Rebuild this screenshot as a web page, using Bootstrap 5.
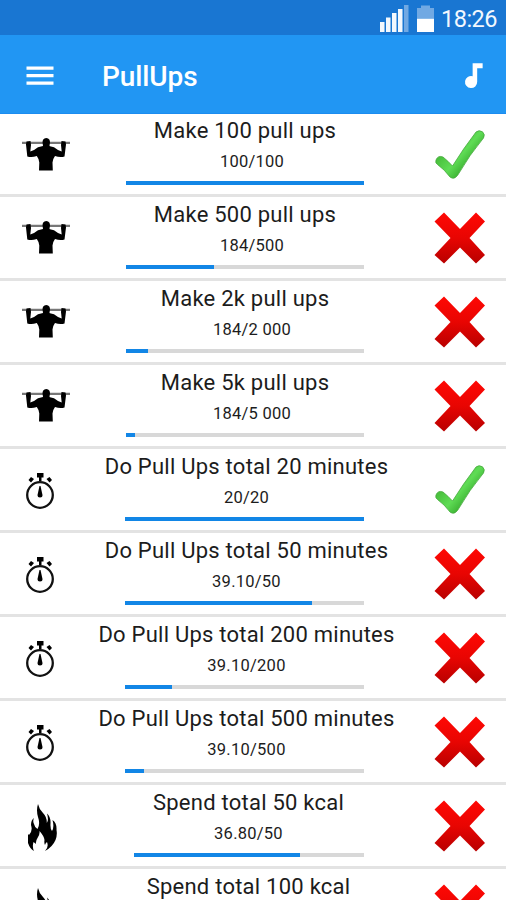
<!DOCTYPE html>
<html lang="en">
<head>
<meta charset="utf-8">
<meta name="viewport" content="width=device-width, initial-scale=1">
<title>PullUps</title>
<link rel="stylesheet" href="https://cdn.jsdelivr.net/npm/bootstrap@5.3.0/dist/css/bootstrap.min.css">
<style>
body{font-family:Roboto,"Liberation Sans",sans-serif;background:#fff;color:#1c1c1c}
.screen{width:506px;height:900px}
.statusbar{height:35px;background:#1976d2;padding:0 9px 0 0}
.clock{font-size:23.5px;line-height:35px;letter-spacing:-.5px;margin:4px 0 0 6px;color:#f3f8fe}
.appbar{height:79px;background:#2196f3;border-bottom:1px solid #1c8cf0;padding:3px 22px 0 26px}
.brand{font-size:28px;font-weight:500;line-height:36px;margin:3px 0 0 48px;letter-spacing:-.1px}
.goal{height:84px;border-bottom:3px solid #e3e3e3}
.goal:first-child{height:83px}
.goal:first-child .info{margin-top:-1px}
.kind{width:90px}
.info{width:320px;margin:0}
.state{width:96px;padding-top:1px}
.title{font-size:22px;line-height:26px;letter-spacing:.24px;padding-top:5px;white-space:nowrap}
.count{font-size:16.5px;line-height:20px;letter-spacing:.25px;margin-top:8px;white-space:nowrap}
.meter{height:4px;width:238px;margin:9px 0 0 36px;background:#d8d8d8;border-radius:0}
.meter .progress-bar{background:#1286e6}
.pull .title{margin-left:-10px}
.pull .count{margin-left:4px}
.time .title,.time .count{margin-left:-7px}
.time .meter{margin-left:35px;width:239px}
.burn .title,.burn .count{margin-left:-3px}
.burn .meter{margin-left:44px;width:230px}
.kind svg,.state svg{display:block}
.pull .kind svg{margin:1px 0 0 22px}
.time .kind svg{margin:2px 0 0 25px}
.burn .kind svg{margin:5px 0 0 28px}
</style>
</head>
<body>
<svg width="0" height="0" class="position-absolute" aria-hidden="true">
<defs>
<linearGradient id="red" x1="0" y1="0" x2="0" y2="1"><stop offset="0" stop-color="#ff0804"/><stop offset=".5" stop-color="#e80502"/><stop offset="1" stop-color="#b80000"/></linearGradient>
<linearGradient id="green" gradientUnits="userSpaceOnUse" x1="12" y1="10" x2="42" y2="36"><stop offset="0" stop-color="#3fb332"/><stop offset=".55" stop-color="#5fdc55"/><stop offset="1" stop-color="#2b9e22"/></linearGradient>
<symbol id="cross" viewBox="0 0 52 52"><path fill="url(#red)" d="M10 .5 26 17 42 .5 51 9.500 35.500 26 51 43 42 51.500 26 35.500 10 51.500.5 43 16.500 26 .5 9.500Z"/></symbol>
<symbol id="check" viewBox="0 0 52 52"><path fill="url(#green)" stroke="#45a83c" stroke-width=".8" d="M2 31Q4 26 9 28Q14 32 18.500 37Q29 20 42 3Q45 .5 48.500 2.800Q51.500 5.500 49.500 9Q36 25 23.500 46.500Q20 51 16 48Q11 41 3.500 35.500Q1 34 2 31Z"/></symbol>
<symbol id="pull" viewBox="0 0 48 34"><path fill="#777" d="M0 3.800h48v2.200H0z"/><path d="M4.500 3.500 8.500 3l.5 4-.7 6.500 3.700-1.500q4-3.500 8-3.700L21 8Q19.800 4 21 1.800 22.300 0 24.300 0q2 0 3.200 1.800Q28.700 4 27.500 8l.5.300q4 .2 8 3.700l3.700 1.500L39 7l.5-4 4 .5.500 3-1.500 12q-4.500 1.300-9.500-.5-2 2.500-2.500 6.500l.3 8H17l.3-8q-.5-4-2.500-6.500-5 1.800-9.500.5L4 6.500Z"/></symbol>
<symbol id="timer" viewBox="0 0 30 36"><circle cx="15" cy="22" r="12.800" fill="none" stroke="#111" stroke-width="2.300"/><path d="M12 0h6.500v4.500h-2V8h-2.500V4.500h-2zM3.500 7 6 4l3 2-3 3.500zM27 7l-2.500-3-3 2 3 3.500z"/><path d="M14.500 13h1L17.500 22q0 2.500-2.500 2.500t-2.500-2.500z"/></symbol>
<symbol id="fire" viewBox="0 0 30 48"><path d="M10 0q1 5 5 9 4 4 3.800 10 2.200-3 .2-9.500Q23 13 22.500 20q-.3 5 1.500 7 2.500-4 .5-11Q29 19 28.500 26q1 5-1 10-3 7-10.500 11 4-4 2-9-1.500 1-2 3-1-2-.5-5-.5-4-5-9 .5 4-2 7-2 3-1.500 6l-2.500-2q-1.500 5 .5 9-4-2-6-8-2.500-5-1-11 .5 2 2 3Q5 27 3 21q0-5 3-7-1.500 3 0 6 .5 3 3.500 5 3-5 .5-12Q8 6 10 0Z"/></symbol>
</defs>
</svg>
<div class="screen overflow-hidden">
<header>
<div class="statusbar d-flex justify-content-end align-items-center">
<svg width="56" height="29" viewBox="0 0 56 29"><path fill="#fff" fill-opacity=".95" d="M1 19h4.500v10H1zM7 14.500h4.500V29H7zM13 10h4.500v19H13zM19 6h4.500v23H19z"/><path fill="#71a9e3" d="M25 2h4.500v27H25zM38 5h4V2.500h9V5h4v10H38z"/><path fill="#fff" d="M38 15.500h17V29H38z"/></svg>
<span class="clock">18:26</span>
</div>
<nav class="appbar d-flex align-items-center text-white">
<svg width="28" height="20" viewBox="0 0 28 20" fill="#fff"><path d="M.5.5h27v3.300H.5zM.5 8h27v3.300H.5zM.5 15.500h27v3.300H.5z"/></svg>
<span class="brand">PullUps</span>
<svg width="20" height="27" viewBox="0 0 22 29" class="ms-auto" fill="#fff"><path d="M9.500 1h11v5.500h-6V21.500a6.700 6.700 0 1 1-5-6.300z"/></svg>
</nav>
</header>
<main id="goals"></main>
</div>
<script src="https://cdn.jsdelivr.net/npm/bootstrap@5.3.0/dist/js/bootstrap.bundle.min.js"></script>
<script>
const icons = {
  pull: '<svg width="48" height="34"><use href="#pull"/></svg>',
  time: '<svg width="30" height="36"><use href="#timer"/></svg>',
  burn: '<svg width="30" height="48"><use href="#fire"/></svg>'
};
const goals = [
  ['pull', 'Make 100 pull ups', '100/100', 100],
  ['pull', 'Make 500 pull ups', '184/500', 36.8],
  ['pull', 'Make 2k pull ups', '184/2 000', 9.3],
  ['pull', 'Make 5k pull ups', '184/5 000', 3.6],
  ['time', 'Do Pull Ups total 20 minutes', '20/20', 100],
  ['time', 'Do Pull Ups total 50 minutes', '39.10/50', 78.2],
  ['time', 'Do Pull Ups total 200 minutes', '39.10/200', 19.6],
  ['time', 'Do Pull Ups total 500 minutes', '39.10/500', 7.8],
  ['burn', 'Spend total 50 kcal', '36.80/50', 72],
  ['burn', 'Spend total 100 kcal', '', 36.8]
];
document.getElementById('goals').innerHTML = goals.map(([kind, title, count, pct]) => `
<section class="goal ${kind} d-flex">
  <div class="kind d-flex align-items-center">${icons[kind]}</div>
  <div class="info text-center">
    <div class="title">${title}</div>
    ${count && `<div class="count">${count}</div>
    <div class="progress meter"><div class="progress-bar" style="width:${pct}%"></div></div>`}
  </div>
  <div class="state d-flex align-items-center ps-4"><svg width="52" height="52"><use href="#${pct === 100 ? 'check' : 'cross'}"/></svg></div>
</section>`).join('');
</script>
</body>
</html>
